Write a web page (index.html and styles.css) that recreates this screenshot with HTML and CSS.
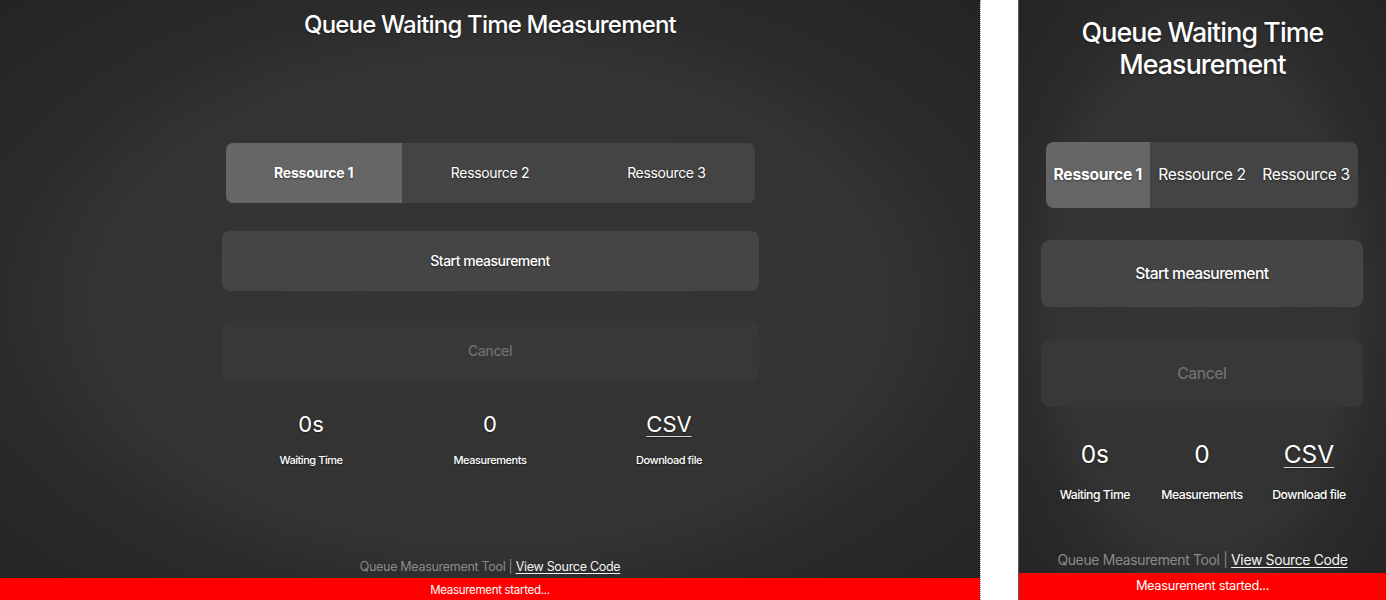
FILE: index.html
```html
<!DOCTYPE html>
<html lang="en">
<head>
<meta charset="utf-8">
<title>Queue Waiting Time Measurement</title>
<link rel="stylesheet" href="styles.css">
</head>
<body>
<div class="stage">
  <section class="app app--wide">
    <h1 class="app__title">Queue Waiting Time Measurement</h1>
    <main class="app__main">
      <div class="segmented">
        <button class="segmented__item is-active">Ressource 1</button>
        <button class="segmented__item">Ressource 2</button>
        <button class="segmented__item">Ressource 3</button>
      </div>
      <button class="btn btn--start">Start measurement</button>
      <button class="btn btn--cancel" disabled>Cancel</button>
      <div class="stats">
        <div class="stat"><div class="stat__value">0s</div><div class="stat__label">Waiting Time</div></div>
        <div class="stat"><div class="stat__value">0</div><div class="stat__label">Measurements</div></div>
        <div class="stat"><a class="stat__value stat__value--link" href="#">CSV</a><div class="stat__label">Download file</div></div>
      </div>
    </main>
    <footer class="app__footer">Queue Measurement Tool | <a class="app__link" href="#">View Source Code</a></footer>
    <div class="toast">Measurement started...</div>
  </section>

  <div class="divider"></div>

  <section class="app app--narrow">
    <h1 class="app__title">Queue Waiting Time Measurement</h1>
    <main class="app__main">
      <div class="segmented">
        <button class="segmented__item is-active">Ressource 1</button>
        <button class="segmented__item">Ressource 2</button>
        <button class="segmented__item">Ressource 3</button>
      </div>
      <button class="btn btn--start">Start measurement</button>
      <button class="btn btn--cancel" disabled>Cancel</button>
      <div class="stats">
        <div class="stat"><div class="stat__value">0s</div><div class="stat__label">Waiting Time</div></div>
        <div class="stat"><div class="stat__value">0</div><div class="stat__label">Measurements</div></div>
        <div class="stat"><a class="stat__value stat__value--link" href="#">CSV</a><div class="stat__label">Download file</div></div>
      </div>
    </main>
    <footer class="app__footer">Queue Measurement Tool | <a class="app__link" href="#">View Source Code</a></footer>
    <div class="toast">Measurement started...</div>
  </section>
</div>
</body>
</html>
```

FILE: styles.css
```css
* {
  box-sizing: border-box;
}

html,
body {
  margin: 0;
  padding: 0;
  background: #ffffff;
}

body {
  font-family: Inter, "Liberation Sans", sans-serif;
  color: #ffffff;
}

.stage {
  display: flex;
  width: 1386px;
  height: 600px;
  overflow: hidden;
  background: #ffffff;
}

.app {
  display: flex;
  flex-direction: column;
  flex: none;
  background: radial-gradient(ellipse at center, #343434 0%, #333333 58%, #2b2b2b 71%, #242424 100%);
  text-shadow: 0 1px 2px rgba(0, 0, 0, 0.45);
}

.app--wide {
  width: 980px;
  height: 602px;
}

.app--narrow {
  zoom: 1.115;
  width: 330px;
  height: 538.2px;
  border-left: 1px solid #5a5a5a;
}

.divider {
  flex: none;
  width: 38px;
  height: 600px;
  border-left: 1px dotted #9a9a9a;
}

.app__title {
  margin: 11px 0 0;
  font-size: 24px;
  line-height: 28.8px;
  font-weight: 500;
  letter-spacing: -0.8px;
  text-align: center;
}

.app--narrow .app__title {
  margin-top: 14px;
}

.app__main {
  flex: 1;
  display: flex;
  flex-direction: column;
  justify-content: center;
  width: 100%;
  max-width: 537px;
  margin: 0 auto;
  padding-top: 11px;
}

.app--narrow .app__main {
  padding-left: 20px;
  padding-right: 21px;
}

.segmented {
  display: grid;
  grid-template-columns: repeat(3, 1fr);
  height: 60px;
  margin: 0 4px;
  border-radius: 7px;
  background: #444444;
  overflow: hidden;
}

.segmented__item {
  border: 0;
  padding: 0;
  background: transparent;
  color: #ffffff;
  font-family: inherit;
  font-size: 14px;
  font-weight: 400;
  letter-spacing: -0.35px;
  text-shadow: inherit;
  white-space: nowrap;
}

.segmented__item.is-active {
  background: #666666;
  font-weight: 700;
  letter-spacing: -0.2px;
}

.btn {
  height: 60px;
  border: 0;
  border-radius: 8px;
  font-family: inherit;
  font-size: 14px;
  font-weight: 500;
  letter-spacing: -0.5px;
  text-shadow: inherit;
}

.btn--start {
  margin-top: 28px;
  background: #454545;
  color: #ffffff;
}

.btn--cancel {
  margin-top: 30px;
  background: #383838;
  color: #6f6f6f;
  letter-spacing: -0.4px;
  text-shadow: none;
}

.stats {
  display: grid;
  grid-template-columns: repeat(3, 1fr);
  margin-top: 30px;
  text-align: center;
}

.stat {
  display: flex;
  flex-direction: column;
  align-items: center;
}

.stat__value {
  font-size: 22px;
  line-height: 26px;
  font-weight: 400;
  color: #ffffff;
}

.stat__value--link {
  text-decoration: underline;
  text-decoration-thickness: 1px;
  text-underline-offset: 4px;
  text-decoration-color: #cfcfcf;
}

.stat__label {
  margin-top: 16px;
  font-size: 11px;
  line-height: 14px;
  font-weight: 500;
  letter-spacing: -0.45px;
}

.app__footer {
  padding-bottom: 3px;
  font-size: 12.5px;
  line-height: 16px;
  letter-spacing: -0.3px;
  text-align: center;
  color: #8a8a8a;
  text-shadow: none;
}

.app__link {
  color: #f2f2f2;
  text-decoration: underline;
  text-underline-offset: 2px;
}

.toast {
  flex: none;
  height: 24px;
  line-height: 24px;
  background: #ff0000;
  color: #ffffff;
  font-size: 11.5px;
  letter-spacing: -0.3px;
  text-align: center;
  text-shadow: none;
}
```
